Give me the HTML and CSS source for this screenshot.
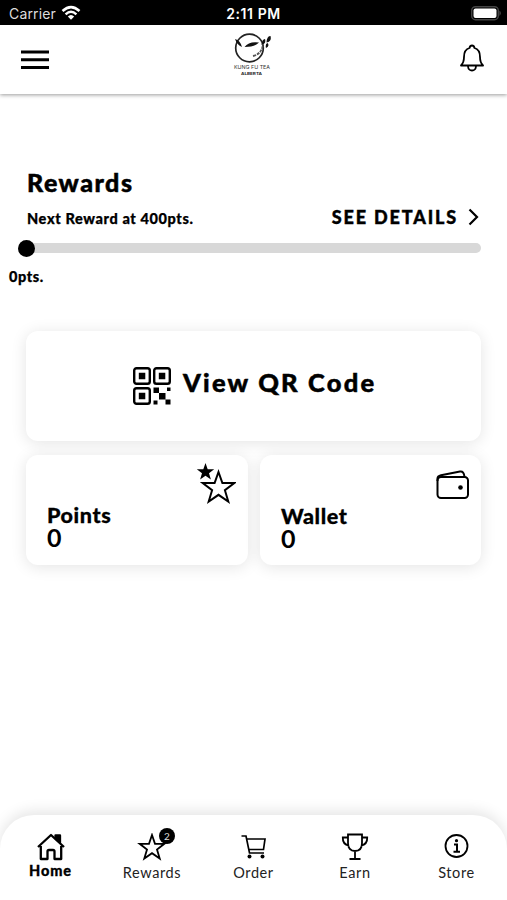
FILE: index.html
```html
<!DOCTYPE html>
<html lang="en">
<head>
<meta charset="utf-8">
<title>Rewards</title>
<link rel="stylesheet" href="styles.css">
</head>
<body>
<div class="app">
  <div class="status">
    <div class="carrier"><span>Carrier</span>
      <svg width="20" height="16" viewBox="0 0 20 16" fill="none" stroke="#fff" stroke-width="2.5"><path d="M1.5 6Q10-1.8 18.500 6M4.600 9.300Q10 4.300 15.400 9.300"/><path d="M6.800 11.500Q10 8.500 13.200 11.500L10 14.700Z" fill="#fff" stroke="none"/></svg>
    </div>
    <div class="time">2:11 PM</div>
    <svg class="battery" width="31" height="15" viewBox="0 0 31 15"><rect x=".7" y=".7" width="26.600" height="13" rx="3.800" fill="#000" stroke="#444" stroke-width="1.400"/><rect x="2.500" y="2.500" width="23" height="9.500" rx="2" fill="#fff"/><path d="M28.500 4.500Q31 7.200 28.500 10Z" fill="#555"/></svg>
  </div>
  <header class="header">
    <svg class="menu" width="28" height="20" viewBox="0 0 28 20"><path d="M0 2H28M0 9.800H28M0 17.500H28" stroke="#000" stroke-width="3"/></svg>
    <svg class="logo" width="44" height="46" viewBox="0 0 44 46">
      <circle cx="18.500" cy="16" r="13.800" fill="none" stroke="#222" stroke-width="1.700"/>
      <path d="M4 7Q9 8 11 15Q6 13 4 7ZM13.500 15Q18 9 28 10.500Q24 15 13.500 15ZM30.500 13Q31 7 34 7Q35.500 12 30.500 13ZM35.500 10.500Q36 3.500 39.500 4Q41 9.500 35.500 10.500ZM35 16Q34 12 36.500 11Q39 14 35 16Z" fill="#111"/>
      <path d="M22 24Q31 22 32 12" fill="none" stroke="#555" stroke-width="1.800" stroke-dasharray="3 1"/>
      <text x="3" y="37" textLength="36" lengthAdjust="spacingAndGlyphs" class="brand">KUNG FU TEA</text>
      <text x="10" y="43" textLength="21" lengthAdjust="spacingAndGlyphs" class="place">ALBERTA</text>
    </svg>
    <svg class="bell" width="24" height="28" viewBox="0 0 24 28" fill="none" stroke="#000" stroke-width="1.800" stroke-linejoin="round"><path d="M1 21.500Q4 18.500 4 13Q4 5.500 9.500 4Q10 1.500 12 1.500T14.500 4Q20 5.500 20 13Q20 18.500 23 21.500ZM8 22.500Q8.500 26.500 12 26.500T16 22.500"/></svg>
  </header>
  <main class="main">
    <h1 class="title">Rewards</h1>
    <div class="next"><span class="next-text">Next Reward at 400pts.</span>
      <a class="details"><span>SEE DETAILS</span><svg width="12" height="18" viewBox="0 0 12 18" fill="none" stroke="#000" stroke-width="2.200"><path d="M1.500 1.500L9 9L1.500 16.500"/></svg></a>
    </div>
    <div class="track"><div class="knob"></div></div>
    <div class="zero">0pts.</div>
    <div class="cards">
      <section class="card qr">
        <svg width="38" height="38" viewBox="0 0 38 38"><g fill="none" stroke="#000" stroke-width="2.400"><rect x="1.200" y="1.200" width="15.600" height="15.600" rx="2.300"/><rect x="21.200" y="1.200" width="15.600" height="15.600" rx="2.300"/><rect x="1.200" y="21.200" width="15.600" height="15.600" rx="2.300"/></g><path d="M5.800 5.800h6.500v6.500h-6.500zM25.800 5.800h6.500v6.500h-6.500zM5.800 25.800h6.500v6.500h-6.500zM20.500 20.500h5.500v5.500h-5.500zM26 26h6.500v6.500h-6.500zM34 20.500h3.500v3.500h-3.500zM20.500 33.500h4v4h-4zM32.500 32.500h5v5h-5z"/></svg>
        <span class="qr-text">View QR Code</span>
      </section>
      <section class="card stat points">
        <svg class="stars" width="40" height="42" viewBox="0 0 40 42"><path d="M9.500 0L11.700 6.200H18.200L13 10.200L14.900 16.500L9.500 12.700L4.100 16.500L6 10.200L.8 6.200H7.300Z"/><path d="M22.500 9L26.400 20H38.300L28.900 27.200L32.300 38.500L22.500 31.800L12.700 38.500L16.100 27.200L6.700 20H18.600Z" fill="#fff" stroke="#000" stroke-width="2"/></svg>
        <span class="name">Points</span><span class="num">0</span>
      </section>
      <section class="card stat wallet">
        <svg class="purse" width="34" height="30" viewBox="0 0 34 30" fill="none" stroke="#000" stroke-width="2"><rect x="1.500" y="7" width="30.500" height="21" rx="3.500"/><path d="M1.500 11V8.500Q1.500 6 5 5.200L24 1.500Q28 .8 28.500 7"/><circle cx="24.500" cy="17.500" r="2.300" fill="#000" stroke="none"/></svg>
        <span class="name">Wallet</span><span class="num">0</span>
      </section>
    </div>
  </main>
  <nav class="nav">
    <a class="tab active"><svg width="30" height="28" viewBox="0 0 30 28" fill="none" stroke="#000" stroke-width="2.300" stroke-linejoin="round"><path d="M2 14L15 2L28 14M4.800 13V26H11.500V18.500Q11.500 17 13 17H17Q18.500 17 18.500 18.500V26H25.200V13"/><path d="M19.500 2.500H24V9.500L19.500 5.500Z" fill="#000"/></svg><span class="home">Home</span></a>
    <a class="tab"><span class="icon"><svg width="30" height="28" viewBox="0 0 30 28" fill="none" stroke="#000" stroke-width="1.800"><path d="M15 2L18 10.800H27.300L20 16.500L22.700 25.500L15 20.200L7.300 25.500L10 16.500L2.700 10.800H12Z"/></svg><b class="badge">2</b></span><span>Rewards</span></a>
    <a class="tab"><svg width="30" height="28" viewBox="0 0 30 28" fill="none" stroke="#000" stroke-width="1.700"><path d="M2.500 3H7L10.500 20H25M8 6H26L24.500 16.500H10"/><circle cx="10.500" cy="23.500" r="2" fill="#000" stroke="none"/><circle cx="23.500" cy="23.500" r="2" fill="#000" stroke="none"/></svg><span>Order</span></a>
    <a class="tab"><svg width="30" height="28" viewBox="0 0 30 28" fill="none" stroke="#000" stroke-width="1.800"><path d="M8 1.500H22V10Q22 18 15 18T8 10ZM8 4.500H2.800Q2.500 11.500 9 12.500M22 4.500H27.200Q27.500 11.500 21 12.500M15 18V26M9.500 26H20.500"/></svg><span>Earn</span></a>
    <a class="tab"><svg width="30" height="28" viewBox="0 0 30 28" fill="none" stroke="#000" stroke-width="1.800"><circle cx="14.500" cy="13" r="11"/><path d="M12 11.500H15V18.500M11.500 18.700H18" stroke-width="2"/><circle cx="14.500" cy="7.700" r="1.600" fill="#000" stroke="none"/></svg><span>Store</span></a>
  </nav>
</div>
</body>
</html>
```
FILE: styles.css
```css
* { box-sizing: border-box; }
body { margin: 0; background: #fff; color: #000; font-family: Lato, "Liberation Sans", sans-serif; }
svg { display: block; flex: none; }
span { white-space: nowrap; }
.app { width: 507px; height: 900px; display: flex; flex-direction: column; overflow: hidden; }
.status { height: 25px; flex: none; background: #000; color: #fff; display: grid; grid-template-columns: 1fr auto 1fr; align-items: center; padding: 2px 6px 0 9px; font-family: Inter, sans-serif; font-size: 14px; }
.carrier { display: flex; align-items: center; gap: 5px; color: #ddd; letter-spacing: .15px; }
.carrier svg { margin-top: -2px; }
.time { font-weight: 600; letter-spacing: .6px; margin-left: -3px; }
.battery { justify-self: end; margin-right: -1px; }
.header { height: 69px; flex: none; display: grid; grid-template-columns: 1fr 44px 1fr; align-items: center; padding: 0 23px 0 21px; box-shadow: 0 1px 4px rgba(0,0,0,.4); }
.logo { margin-top: -10px; }
.bell { justify-self: end; margin-top: -3px; }
.brand { font: 5px Inter, sans-serif; fill: #333; }
.place { font: bold 4px Inter, sans-serif; fill: #222; }
.main { flex: 1; padding: 74px 26px 0 26px; }
.title { margin: 0 0 0 1px; font-size: 25px; line-height: 28px; font-weight: 900; letter-spacing: 1.5px; -webkit-text-stroke: .5px #000; }
.next { height: 36px; margin-top: 4px; padding: 0 1px; display: flex; justify-content: space-between; }
.next-text { font-size: 14.5px; line-height: 37px; font-weight: 900; letter-spacing: .62px; -webkit-text-stroke: .25px #000; }
.details { display: flex; align-items: center; gap: 10px; height: 33px; font-size: 18px; font-weight: 900; letter-spacing: 1.85px; -webkit-text-stroke: .4px #000; }
.track { height: 10px; margin-top: 7px; border-radius: 5px; background: #d8d8d8; position: relative; }
.knob { position: absolute; left: -8px; top: -3.5px; width: 17px; height: 17px; border-radius: 50%; background: #000; }
.zero { margin: 14px 0 0 -17px; font-size: 14.5px; line-height: 20px; font-weight: 900; letter-spacing: .6px; -webkit-text-stroke: .25px #000; }
.cards { display: grid; grid-template-columns: 222px 221px; gap: 14px 12px; margin-top: 44px; }
.card { height: 110px; border-radius: 12px; background: #fff; box-shadow: 0 2px 16px rgba(0,0,0,.11); }
.qr { grid-column: 1 / 3; display: flex; align-items: center; padding-left: 107px; gap: 12px; }
.qr-text { margin-top: -8px; font-size: 25.5px; font-weight: 900; letter-spacing: 2.2px; -webkit-text-stroke: .5px #000; }
.stat { display: flex; flex-direction: column; padding-left: 21px; }
.stars { align-self: flex-end; margin: 8px 12px 0 0; }
.purse { align-self: flex-end; margin: 15px 11px 5px 0; }
.name { font-size: 21.5px; line-height: 22px; font-weight: 900; letter-spacing: .6px; -webkit-text-stroke: .3px #000; }
.points .name { margin-top: -1px; }
.num { font-size: 25px; line-height: 22px; font-weight: 700; }
.nav { height: 85px; flex: none; display: flex; justify-content: space-between; border-radius: 34px 34px 0 0; box-shadow: 0 -4px 14px rgba(0,0,0,.1); padding: 18px 0 0; }
.tab { width: 101px; display: flex; flex-direction: column; align-items: center; font-size: 14.5px; line-height: 20px; color: #222; letter-spacing: .6px; }
.tab > span:last-child { margin-top: 2px; }
.tab.active > span:last-child { font-weight: 900; color: #000; margin-top: 0; letter-spacing: .9px; -webkit-text-stroke: .3px #000; }
.icon { position: relative; }
.badge { position: absolute; left: 22px; top: -5px; width: 16px; height: 16px; border-radius: 50%; background: #000; color: #ddd; font-size: 10px; line-height: 16px; font-weight: 400; letter-spacing: 0; text-align: center; }
```
